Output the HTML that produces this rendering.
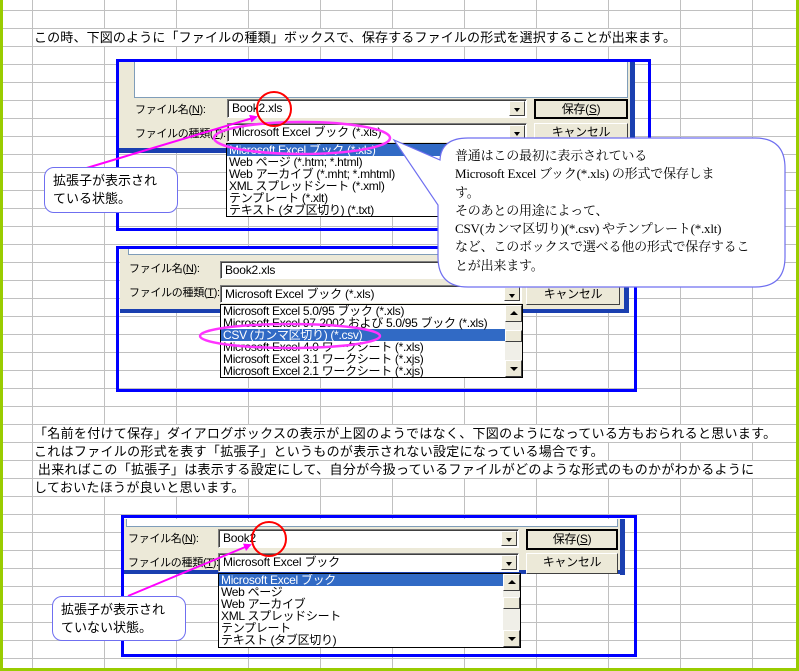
<!DOCTYPE html>
<html><head><meta charset="utf-8">
<style>
*{margin:0;padding:0;box-sizing:border-box}
body{width:799px;height:671px;overflow:hidden;background:#fff;position:relative;font-family:"Liberation Sans","Noto Sans CJK JP",sans-serif;}
.grid{position:absolute;left:0;top:0;width:799px;height:671px;
background-image:linear-gradient(to right,#c0c0c0 1px,transparent 1px),linear-gradient(to bottom,#c0c0c0 1px,transparent 1px);
background-size:72px 18px,72px 18px;background-position:32px 0,0 10px;}
.a{position:absolute}
.t{position:absolute;left:33px;height:17px;background:#fff;font-size:13px;line-height:17px;white-space:nowrap;letter-spacing:0.15px;color:#000;padding-left:1px}
.frame{position:absolute;border:3px solid #0000ff}
.beige{position:absolute;background:#ece9d8}
.dark{position:absolute;background:#1a3fb0}
.wa{position:absolute;background:#fff;border:1px solid #7f9db9;border-top:none}
.lbl{position:absolute;font-size:11px;line-height:14px;white-space:nowrap;letter-spacing:-0.3px}
.inp{position:absolute;background:#fff;border:1px solid #7f7f7f;border-right-color:#fff;border-bottom-color:#fff;box-shadow:inset 1px 1px 0 #404040;font-size:12px;line-height:16px;padding-left:4px;white-space:nowrap;letter-spacing:-0.2px}
.dd{position:absolute;top:1px;right:1px;width:16px;bottom:1px;background:#ece9d8;border:1px solid #fff;border-right-color:#404040;border-bottom-color:#404040}
.dd:after{content:"";position:absolute;left:4px;top:6px;border-left:3px solid transparent;border-right:3px solid transparent;border-top:4px solid #000}
.btn{position:absolute;background:#ece9d8;border:1px solid #fff;border-right-color:#404040;border-bottom-color:#404040;font-size:12px;text-align:center;line-height:17px;letter-spacing:-0.3px}
.btn.def{border:2px solid #000}
.list{position:absolute;background:#fff;border:1px solid #000;font-size:12px;line-height:12px;white-space:nowrap;overflow:hidden;letter-spacing:-0.3px}
.it{height:12px;padding-left:2px}
.hl{background:#316ac5;color:#fff}
.sb{position:absolute;right:0;top:0;bottom:0;width:17px;background:#f0efe8}
.sbb{position:absolute;left:0;width:17px;height:17px;background:#ece9d8;border:1px solid #fff;border-right-color:#404040;border-bottom-color:#404040}
.up:after{content:"";position:absolute;left:4px;top:5px;border-left:4px solid transparent;border-right:4px solid transparent;border-bottom:4px solid #000}
.dn:after{content:"";position:absolute;left:4px;top:6px;border-left:4px solid transparent;border-right:4px solid transparent;border-top:4px solid #000}
.call{position:absolute;background:#fff;border:1px solid #6f6ff0;border-radius:10px;font-size:13px;line-height:18px;padding:4px 0 0 8px;white-space:nowrap}
.big{position:absolute;font-family:"Liberation Serif","Noto Serif CJK JP",serif;font-size:13px;line-height:18.3px;white-space:nowrap;letter-spacing:-0.2px}
</style></head><body>
<div class="grid"></div>
<div class="a" style="left:0;top:0;width:3px;height:671px;background:#99cc00"></div>
<div class="a" style="right:0;top:0;width:3px;height:671px;background:#99cc00"></div>
<div class="a" style="left:0;bottom:0;width:799px;height:3px;background:#99cc00"></div>

<div class="t" style="top:29px">この時、下図のように「ファイルの種類」ボックスで、保存するファイルの形式を選択することが出来ます。</div>
<div class="t" style="top:425px;letter-spacing:0.3px">「名前を付けて保存」ダイアログボックスの表示が上図のようではなく、下図のようになっている方もおられると思います。</div>
<div class="t" style="top:443px;letter-spacing:0.3px">これはファイルの形式を表す「拡張子」というものが表示されない設定になっている場合です。</div>
<div class="t" style="top:461px;letter-spacing:0.3px">&nbsp;出来ればこの「拡張子」は表示する設定にして、自分が今扱っているファイルがどのような形式のものかがわかるように</div>
<div class="t" style="top:479px;letter-spacing:0.3px">しておいたほうが良いと思います。</div>

<!-- Dialog 1 -->
<div class="beige" style="left:119px;top:62px;width:511px;height:86px"></div>
<div class="dark" style="left:630px;top:62px;width:5px;height:91px"></div>
<div class="dark" style="left:119px;top:148px;width:516px;height:5px"></div>
<div class="wa" style="left:134px;top:62px;width:494px;height:36px"></div>
<div class="lbl" style="left:135px;top:103px">ファイル名(<u>N</u>):</div>
<div class="lbl" style="left:135px;top:127px">ファイルの種類(<u>T</u>):</div>
<div class="inp" style="left:227px;top:99px;width:300px;height:19px">Book2.xls<div class="dd"></div></div>
<div class="inp" style="left:227px;top:123px;width:300px;height:19px">Microsoft Excel ブック (*.xls)<div class="dd"></div></div>
<div class="btn def" style="left:534px;top:99px;width:94px;height:20px">保存(<u>S</u>)</div>
<div class="btn" style="left:534px;top:123px;width:94px;height:20px">キャンセル</div>
<div class="list" style="left:226px;top:143px;width:300px;height:74px">
<div class="it hl">Microsoft Excel ブック (*.xls)</div><div class="it">Web ページ (*.htm; *.html)</div><div class="it">Web アーカイブ (*.mht; *.mhtml)</div><div class="it">XML スプレッドシート (*.xml)</div><div class="it">テンプレート (*.xlt)</div><div class="it">テキスト (タブ区切り) (*.txt)</div></div>
<div class="frame" style="left:116px;top:59px;width:535px;height:172px"></div>

<!-- Dialog 2 -->
<div class="beige" style="left:120px;top:249px;width:504px;height:60px"></div>
<div class="dark" style="left:624px;top:249px;width:5px;height:64px"></div>
<div class="dark" style="left:120px;top:309px;width:509px;height:4px"></div>
<div class="wa" style="left:128px;top:249px;width:494px;height:6px"></div>
<div class="lbl" style="left:129px;top:262px">ファイル名(<u>N</u>):</div>
<div class="lbl" style="left:129px;top:286px">ファイルの種類(<u>T</u>):</div>
<div class="inp" style="left:220px;top:261px;width:302px;height:18px">Book2.xls<div class="dd"></div></div>
<div class="inp" style="left:220px;top:285px;width:302px;height:18px">Microsoft Excel ブック (*.xls)<div class="dd"></div></div>
<div class="btn" style="left:526px;top:285px;width:94px;height:20px">キャンセル</div>
<div class="list" style="left:220px;top:304px;width:303px;height:74px">
<div class="it">Microsoft Excel 5.0/95 ブック (*.xls)</div><div class="it">Microsoft Excel 97-2002 および 5.0/95 ブック (*.xls)</div><div class="it hl" style="margin-right:17px">CSV (カンマ区切り) (*.csv)</div><div class="it">Microsoft Excel 4.0 ワークシート (*.xls)</div><div class="it">Microsoft Excel 3.1 ワークシート (*.xjs)</div><div class="it">Microsoft Excel 2.1 ワークシート (*.xjs)</div>
<div class="sb"><div class="sbb up" style="top:0"></div><div class="sbb" style="top:25px;height:12px"></div><div class="sbb dn" style="bottom:0"></div></div></div>
<div class="frame" style="left:116px;top:246px;width:521px;height:146px"></div>

<!-- Dialog 3 -->
<div class="beige" style="left:124px;top:519px;width:499px;height:52px"></div>
<div class="dark" style="left:620px;top:519px;width:5px;height:56px"></div>
<div class="dark" style="left:124px;top:570px;width:501px;height:4px"></div>
<div class="wa" style="left:126px;top:519px;width:492px;height:8px"></div>
<div class="lbl" style="left:128px;top:532px">ファイル名(<u>N</u>):</div>
<div class="lbl" style="left:128px;top:556px">ファイルの種類(<u>T</u>):</div>
<div class="inp" style="left:218px;top:529px;width:301px;height:19px">Book2<div class="dd"></div></div>
<div class="inp" style="left:218px;top:553px;width:301px;height:19px">Microsoft Excel ブック<div class="dd"></div></div>
<div class="btn def" style="left:526px;top:529px;width:92px;height:21px">保存(<u>S</u>)</div>
<div class="btn" style="left:526px;top:553px;width:92px;height:21px">キャンセル</div>
<div class="list" style="left:218px;top:573px;width:303px;height:75px">
<div class="it hl" style="margin-right:17px">Microsoft Excel ブック</div><div class="it">Web ページ</div><div class="it">Web アーカイブ</div><div class="it">XML スプレッドシート</div><div class="it">テンプレート</div><div class="it">テキスト (タブ区切り)</div>
<div class="sb"><div class="sbb up" style="top:0"></div><div class="sbb" style="top:23px;height:12px"></div><div class="sbb dn" style="bottom:0"></div></div></div>
<div class="frame" style="left:121px;top:515px;width:516px;height:142px"></div>

<svg class="a" style="left:0;top:0" width="799" height="671">
<defs><marker id="ah" markerWidth="8" markerHeight="8" refX="6" refY="4" orient="auto" markerUnits="userSpaceOnUse"><path d="M0,0 L8,4 L0,8 z" fill="#ff00ff"/></marker></defs>
<ellipse cx="302" cy="138" rx="88" ry="16" fill="none" stroke="#ff33ff" stroke-width="2.5"/>
<circle cx="274" cy="109" r="17" fill="none" stroke="#ff0000" stroke-width="2"/>
<line x1="80" y1="170" x2="256" y2="117" stroke="#ff00ff" stroke-width="2" marker-end="url(#ah)"/>
<ellipse cx="290" cy="336" rx="90" ry="12" fill="none" stroke="#ff33ff" stroke-width="2.5"/>
<circle cx="269" cy="539" r="17" fill="none" stroke="#ff0000" stroke-width="2"/>
<line x1="128" y1="596" x2="250" y2="545" stroke="#ff00ff" stroke-width="2" marker-end="url(#ah)"/>
<path d="M468,138 H755 Q785,138 785,168 V257 Q785,287 755,287 H468 Q438,287 438,257 V205 L394,140 L440,160 Q441,138 468,138 Z" fill="#fff" stroke="#6f6ff0" stroke-width="1.2"/>
</svg>

<div class="big" style="left:455px;top:147px">普通はこの最初に表示されている<br>Microsoft Excel ブック(*.xls) の形式で保存しま<br>す。<br>そのあとの用途によって、<br>CSV(カンマ区切り)(*.csv) やテンプレート(*.xlt)<br>など、このボックスで選べる他の形式で保存するこ<br>とが出来ます。</div>

<div class="call" style="left:44px;top:167px;width:134px;height:46px">拡張子が表示され<br>ている状態。</div>
<div class="call" style="left:52px;top:596px;width:134px;height:45px">拡張子が表示され<br>ていない状態。</div>
</body></html>
